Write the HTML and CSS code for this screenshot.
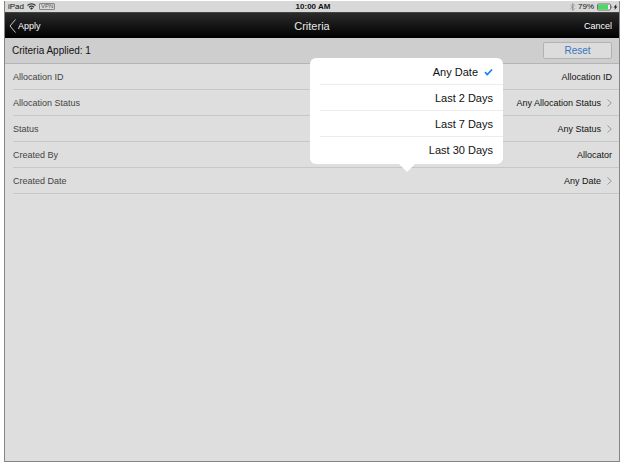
FILE: index.html
```
<!DOCTYPE html>
<html lang="en">
<head>
    <meta charset="UTF-8">
    <meta name="viewport" content="width=device-width, initial-scale=1.0">
    <title>Criteria</title>
    <link rel="stylesheet" href="styles.css">
</head>
<body>

<div class="screen">
    <div class="status-bar">
        <div class="status-left">
            <span>iPad</span>
            <svg class="wifi" width="9" height="7" viewBox="0 0 18 14">
                <path d="M1 5a11.500 11.500 0 0 1 16 0M4 8.500a7.500 7.500 0 0 1 10 0" fill="none" stroke="#333" stroke-width="2.400"/>
                <path d="M9 13.500L5.800 10.500a4.500 4.500 0 0 1 6.400 0z" fill="#333"/>
            </svg>
            <span class="vpn">VPN</span>
        </div>
        <div class="status-time">10:00 AM</div>
        <div class="status-right">
            <svg width="5" height="8" viewBox="0 0 10 16">
                <path d="M1 4.500l8 7L5 15V1l4 3.500-8 7" fill="none" stroke="#888" stroke-width="1.400"/>
            </svg>
            <span>79%</span>
            <svg width="21" height="8" viewBox="0 0 21 8">
                <rect x="0.500" y="1" width="13" height="6" rx="1" fill="#eee" stroke="#555" stroke-width="0.800"/>
                <rect x="1" y="1.500" width="10" height="5" fill="#4cd964"/>
                <path d="M14.500 2.500q1.500 1.500 0 3z" fill="#444"/>
                <path d="M19.500 1l-3 3.500h1.600L17.500 7l3-3.500h-1.700z" fill="#222"/>
            </svg>
        </div>
    </div>

    <header class="nav-bar">
        <button class="nav-button nav-back" type="button">
            <svg width="7" height="14" viewBox="0 0 7 14">
                <path d="M6.500 0.500L1 7l5.500 6.500" fill="none" stroke="#ddd" stroke-width="0.900"/>
            </svg>
            Apply
        </button>
        <h1 class="nav-title">Criteria</h1>
        <button class="nav-button nav-cancel" type="button">Cancel</button>
    </header>

    <div class="summary">
        <span>Criteria Applied: 1</span>
        <button class="reset" type="button">Reset</button>
    </div>

    <ul class="criteria">
        <li class="row">
            <span class="row-label">Allocation ID</span>
            <span class="row-value">Allocation ID</span>
        </li>
        <li class="row">
            <span class="row-label">Allocation Status</span>
            <span class="row-value">Any Allocation Status</span>
            <svg class="chevron" width="5" height="8" viewBox="0 0 5 8"><path d="M0.500 0.500L4.300 4 0.500 7.500"/></svg>
        </li>
        <li class="row">
            <span class="row-label">Status</span>
            <span class="row-value">Any Status</span>
            <svg class="chevron" width="5" height="8" viewBox="0 0 5 8"><path d="M0.500 0.500L4.300 4 0.500 7.500"/></svg>
        </li>
        <li class="row">
            <span class="row-label">Created By</span>
            <span class="row-value">Allocator</span>
        </li>
        <li class="row">
            <span class="row-label">Created Date</span>
            <span class="row-value">Any Date</span>
            <svg class="chevron" width="5" height="8" viewBox="0 0 5 8"><path d="M0.500 0.500L4.300 4 0.500 7.500"/></svg>
        </li>
    </ul>

    <div class="popover">
        <button class="option" type="button">
            Any Date
            <svg width="9" height="8" viewBox="0 0 9 8">
                <path d="M1 4.200l2.300 2.300L8 1.500" fill="none" stroke="#157efb" stroke-width="1.700"/>
            </svg>
        </button>
        <button class="option" type="button">Last 2 Days</button>
        <button class="option" type="button">Last 7 Days</button>
        <button class="option" type="button">Last 30 Days</button>
    </div>
</div>

</body>
</html>
```
FILE: styles.css
```
* {
    box-sizing: border-box;
}

body {
    margin: 0;
    height: 100vh;
    padding: 1px 0 2px 4px;
    display: flex;
    background-color: #fff;
    font-family: "Liberation Sans", Arial, sans-serif;
    font-size: 9px;
    color: #111;
}

button {
    font-family: inherit;
    border: none;
    background: none;
    padding: 0;
    cursor: pointer;
}

svg {
    flex: none;
}

.screen {
    position: relative;
    flex: 1;
    background-color: #dedede;
    border: 1px solid #858587;
    border-top: none;
}

.status-bar {
    display: grid;
    grid-template-columns: 1fr auto 1fr;
    align-items: center;
    height: 11px;
    padding: 0 1px 0 3px;
    background-color: #d8d8d8;
    font-size: 8px;
    line-height: 11px;
}

.status-left,
.status-right {
    display: flex;
    align-items: center;
    gap: 3px;
}

.status-right {
    justify-content: flex-end;
}

.status-time {
    font-weight: bold;
}

.vpn {
    border: 1px solid #888;
    border-radius: 1px;
    padding: 0 1px;
    font-size: 6px;
    line-height: 5px;
    color: #555;
}

.nav-bar {
    display: grid;
    grid-template-columns: 1fr auto 1fr;
    align-items: center;
    height: 26px;
    padding: 0 4px;
    background: linear-gradient(#2a2a2a, #111 60%, #000);
    border-top: 1px solid #444;
}

.nav-title {
    margin: 0;
    font-size: 11px;
    font-weight: normal;
    color: #e8e8e8;
}

.nav-button {
    display: flex;
    align-items: center;
    gap: 2px;
    font-size: 9px;
    color: #fff;
}

.nav-cancel {
    justify-self: end;
    padding-right: 3px;
}

.summary {
    display: flex;
    justify-content: space-between;
    align-items: center;
    height: 26px;
    padding: 0 7px;
    background-color: #cecece;
    border-bottom: 1px solid #b4b4b4;
    font-size: 10px;
}

.reset {
    width: 69px;
    height: 17px;
    border: 1px solid #b2b2b2;
    border-radius: 2px;
    background-color: #dcdcdc;
    font-size: 10px;
    color: #3577bd;
}

.criteria {
    margin: 0;
    padding: 0 0 0 8px;
    list-style: none;
}

.row {
    display: flex;
    align-items: center;
    height: 26px;
    padding-right: 7px;
    border-bottom: 1px solid #c3c8ca;
}

.row-label {
    flex: 1;
    color: #444;
}

.chevron {
    margin-left: 6px;
    fill: none;
    stroke: #999;
    stroke-width: 1;
}

.popover {
    position: absolute;
    top: 57px;
    right: 116px;
    width: 193px;
    padding: 1px 0 1px 10px;
    border-radius: 6px;
    background-color: #fff;
}

.popover::after {
    content: "";
    position: absolute;
    top: 100%;
    left: 50%;
    margin-left: -8px;
    border: 8px solid transparent;
    border-top-color: #fff;
    border-bottom: none;
}

.option {
    display: flex;
    justify-content: flex-end;
    align-items: center;
    gap: 6px;
    width: 100%;
    height: 26px;
    padding-right: 10px;
    border-bottom: 1px solid #ececec;
    font-size: 11px;
    color: #111;
}

.option:last-child {
    border-bottom: none;
}
```
